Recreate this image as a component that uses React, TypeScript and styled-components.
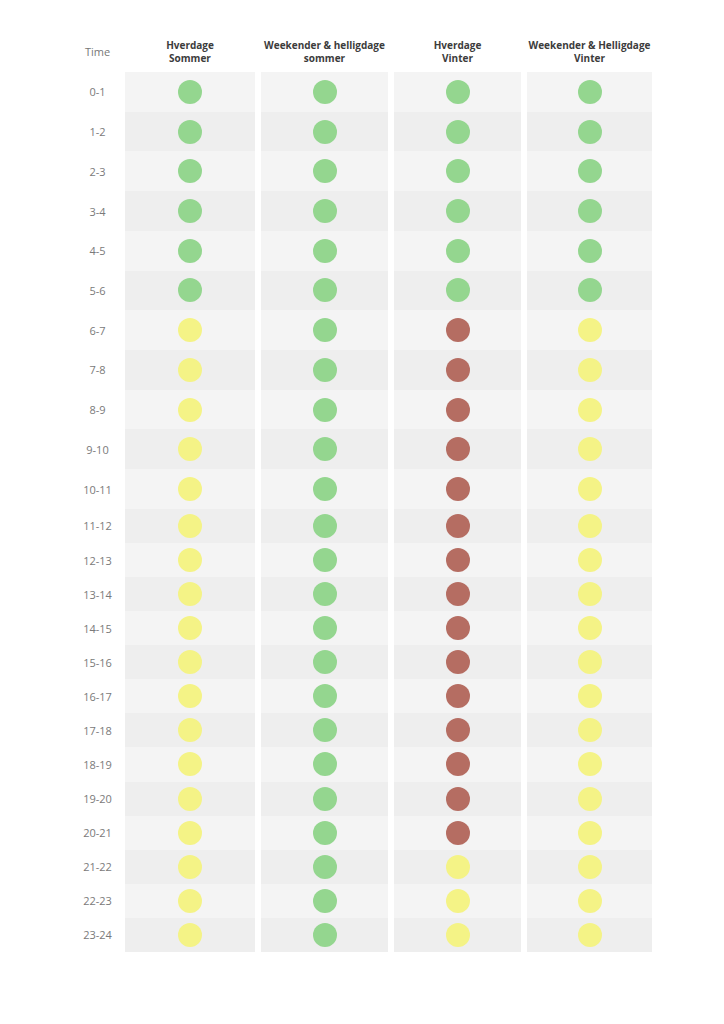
import React from "react";
import styled, { createGlobalStyle } from "styled-components";

type Level = "g" | "y" | "r";

const GlobalStyle = createGlobalStyle`
  html, body {
    margin: 0;
    padding: 0;
    background: #ffffff;
  }
  body {
    font-family: "Open Sans", "Noto Sans", "Liberation Sans", sans-serif;
  }
`;

const colors: Record<Level, string> = {
  g: "#94d68f",
  y: "#f4f386",
  r: "#b56d62",
};

const hours = Array.from({ length: 24 }, (_, i) => `${i}-${i + 1}`);

// which level each column has per hour
const level = (col: number, hour: number): Level => {
  if (col === 1) return "g";
  if (hour < 6) return "g";
  if (col === 2) return hour <= 20 ? "r" : "y";
  return "y";
};

const headers = [
  ["Hverdage", "Sommer"],
  ["Weekender & helligdage", "sommer"],
  ["Hverdage", "Vinter"],
  ["Weekender & Helligdage", "Vinter"],
];

const Page = styled.div`
  padding: 31px 0 60px 76px;
`;

const Table = styled.div`
  display: grid;
  grid-template-columns: 43px 130px 127px 127px 125px;
  column-gap: 6px;
  row-gap: 0;
`;

const HeadCell = styled.div<{ $time?: boolean }>`
  height: 41px;
  display: flex;
  align-items: center;
  justify-content: center;
  text-align: center;
  font-size: ${(p) => (p.$time ? "11px" : "10px")};
  font-weight: ${(p) => (p.$time ? 400 : 700)};
  line-height: 13px;
  color: ${(p) => (p.$time ? "#777777" : "#3c3c3c")};
`;

const TimeCell = styled.div<{ $tall: boolean }>`
  height: ${(p) => (p.$tall ? "39.73px" : "34.08px")};
  display: flex;
  align-items: center;
  justify-content: center;
  font-size: 11px;
  color: #7a7a7a;
`;

const Cell = styled.div<{ $tall: boolean; $odd: boolean }>`
  height: ${(p) => (p.$tall ? "39.73px" : "34.08px")};
  display: flex;
  align-items: center;
  justify-content: center;
  background: ${(p) => (p.$odd ? "#eeeeee" : "#f4f4f4")};
`;

const Dot = styled.span<{ $level: Level }>`
  width: 24px;
  height: 24px;
  border-radius: 50%;
  background: ${(p) => colors[p.$level]};
`;

export default function App() {
  return (
    <>
      <GlobalStyle />
      <Page>
        <Table>
          <HeadCell $time>Time</HeadCell>
          {headers.map((h) => (
            <HeadCell key={h.join()}>
              {h[0]}
              <br />
              {h[1]}
            </HeadCell>
          ))}
          {hours.map((label, hour) => {
            const tall = hour < 11;
            const odd = hour % 2 === 1;
            return (
              <React.Fragment key={label}>
                <TimeCell $tall={tall}>{label}</TimeCell>
                {[0, 1, 2, 3].map((col) => (
                  <Cell key={col} $tall={tall} $odd={odd}>
                    <Dot $level={level(col, hour)} />
                  </Cell>
                ))}
              </React.Fragment>
            );
          })}
        </Table>
      </Page>
    </>
  );
}
